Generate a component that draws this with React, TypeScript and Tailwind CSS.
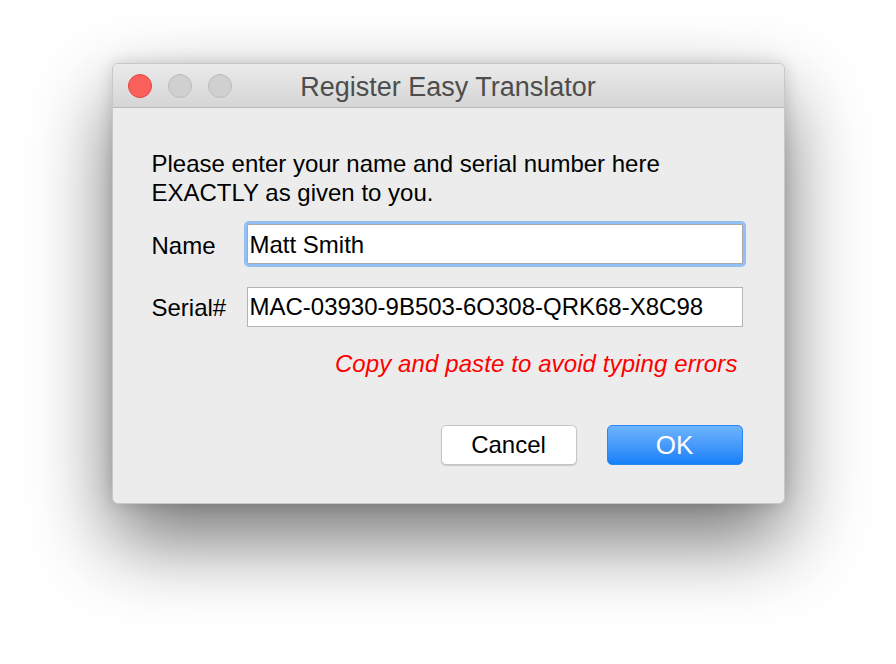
import React from 'react';

const font = { fontFamily: '"Liberation Sans", Arial, sans-serif' };

export default function App() {
  return (
    <div className="min-h-screen w-full bg-white pt-[63px]" style={font}>
      <div className="mx-auto w-[673px] h-[441px] rounded-[6px] bg-[#ececec] border border-[#c8c8c8] shadow-[0_36px_80px_rgba(0,0,0,0.55),0_0_16px_rgba(0,0,0,0.15)] overflow-hidden flex flex-col">
        {/* Title bar */}
        <div className="relative h-[44px] shrink-0 flex items-center bg-gradient-to-b from-[#ebebeb] to-[#d5d5d5] border-b border-[#b9b9b9]">
          <div className="flex items-center gap-[16px] pl-[15px]">
            <span className="w-[24px] h-[24px] rounded-full bg-[#fc605c] border border-[#e0443e]" />
            <span className="w-[24px] h-[24px] rounded-full bg-[#d0d0d0] border border-[#bcbcbc]" />
            <span className="w-[24px] h-[24px] rounded-full bg-[#d0d0d0] border border-[#bcbcbc]" />
          </div>
          <div className="absolute inset-0 pt-[4px] flex items-center justify-center text-[27px] text-[#4d4d4d] pointer-events-none">
            Register Easy Translator
          </div>
        </div>

        {/* Body */}
        <div className="flex flex-col pl-[39px] pr-[41px] pt-[41px] text-black">
          <p className="text-[24px] leading-[29px]">
            Please enter your name and serial number here
            <br />
            EXACTLY as given to you.
          </p>

          <div className="mt-[17px] flex items-center">
            <span className="w-[95px] pt-[3px] text-[24px]">Name</span>
            <div className="flex-1 h-[40px] bg-white border border-[#a9a9a9] rounded-[2px] shadow-[0_0_0_3px_#94bff2] flex items-center px-[2px] pt-[2px] text-[24px]">
              Matt Smith
            </div>
          </div>

          <div className="mt-[23px] flex items-center">
            <span className="w-[95px] pt-[1px] text-[24px]">Serial#</span>
            <div className="flex-1 h-[40px] bg-white border border-[#b3b3b3] flex items-center px-[2px] text-[24px]">
              MAC-03930-9B503-6O308-QRK68-X8C98
            </div>
          </div>

          <div className="mt-[23px] pr-[5px] text-right text-[24px] tracking-[0.1px] leading-[28px] italic text-[#ff0000]">
            Copy and paste to avoid typing errors
          </div>

          <div className="mt-[47px] flex justify-end gap-[30px]">
            <button className="w-[136px] h-[40px] rounded-[5px] bg-white border border-[#c5c5c5] shadow-[0_1px_1px_rgba(0,0,0,0.15)] text-[24px] text-black">
              Cancel
            </button>
            <button className="w-[136px] h-[40px] rounded-[5px] bg-gradient-to-b from-[#6db3fb] to-[#137ff9] border border-[#2a87f0] text-[26px] text-white">
              OK
            </button>
          </div>
        </div>
      </div>
    </div>
  );
}
